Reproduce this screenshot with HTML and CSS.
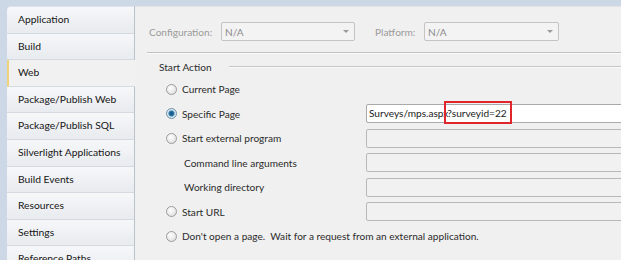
FILE: index.html
```html
<!DOCTYPE html>
<html lang="en">
<head>
<meta charset="UTF-8">
<title>Project Properties - Web</title>
<link rel="stylesheet" href="styles.css">
</head>
<body>
<div class="window">
    <nav class="tabs">
        <div class="tab first">Application</div>
        <div class="tab">Build</div>
        <div class="tab active">Web</div>
        <div class="tab">Package/Publish Web</div>
        <div class="tab">Package/Publish SQL</div>
        <div class="tab">Silverlight Applications</div>
        <div class="tab">Build Events</div>
        <div class="tab">Resources</div>
        <div class="tab">Settings</div>
        <div class="tab">Reference Paths</div>
    </nav>
    <main class="panel">
        <div class="config-bar">
            <span class="dim config-label">Configuration:</span>
            <div class="combo config-combo"><span>N/A</span><span class="arrow"></span></div>
            <span class="dim platform-label">Platform:</span>
            <div class="combo platform-combo"><span>N/A</span><span class="arrow"></span></div>
        </div>
        <div class="rule"></div>
        <section class="group">
            <div class="group-head"><span>Start Action</span><span class="group-line"></span></div>
            <div class="row">
                <label class="option"><span class="radio"></span>Current Page</label>
            </div>
            <div class="row">
                <label class="option"><span class="radio checked"></span>Specific Page</label>
                <div class="field active-field">Surveys/mps.aspx<span class="mark">?surveyid=22</span></div>
            </div>
            <div class="row">
                <label class="option"><span class="radio"></span>Start external program</label>
                <div class="field"></div>
            </div>
            <div class="row">
                <span class="sub-label">Command line arguments</span>
                <div class="field"></div>
            </div>
            <div class="row">
                <span class="sub-label">Working directory</span>
                <div class="field"></div>
            </div>
            <div class="row">
                <label class="option"><span class="radio"></span>Start URL</label>
                <div class="field"></div>
            </div>
            <div class="row">
                <label class="option wide"><span class="radio"></span>Don't open a page.&nbsp; Wait for a request from an external application.</label>
            </div>
        </section>
    </main>
</div>
</body>
</html>
```
FILE: styles.css
```css
body {
    margin: 0;
    background-color: #cdd8e6;
    font-family: Lato, 'Liberation Sans', sans-serif;
    font-size: 10.1px;
    color: #2b2b2b;
    overflow: hidden;
}
.window {
    display: flex;
    height: 260px;
    padding: 6px 0 0 7px;
    box-sizing: border-box;
}
.tabs {
    width: 127px;
    flex-shrink: 0;
    background-color: #dfe5ec;
    border-right: 1px solid #b9c3ce;
    border-top-left-radius: 4px;
    padding-top: 1px;
}
.tab {
    height: 25.6px;
    line-height: 25.6px;
    padding-left: 11px;
    border-bottom: 1px solid #d5dae1;
    background: linear-gradient(#f6f7f9, #e8ebef);
    color: #161616;
    font-size: 10.3px;
    white-space: nowrap;
}
.tab.first {
    border-top-left-radius: 4px;
}
.tab.active {
    background: #f1f1f1;
    margin-right: -1px;
    border-left: 2px solid #f0d27a;
    padding-left: 9px;
    position: relative;
}
.panel {
    flex: 1;
    background-color: #f0f0f0;
    border-top: 1px solid #e4e4e4;
    overflow: hidden;
}
.config-bar {
    display: flex;
    align-items: center;
    padding: 15px 0 0 14px;
}
.dim {
    color: #9b9b9b;
}
.config-label {
    width: 72px;
}
.platform-label {
    width: 49px;
    margin-left: 20px;
}
.combo {
    height: 17px;
    border: 1px solid #c4c4c4;
    border-radius: 2px;
    background-color: #f3f3f3;
    display: flex;
    align-items: center;
    justify-content: space-between;
    padding: 0 5px 0 3px;
    color: #8a8a8a;
    box-sizing: content-box;
}
.config-combo {
    width: 124px;
}
.platform-combo {
    width: 125px;
}
.arrow {
    width: 0;
    height: 0;
    border-left: 3px solid transparent;
    border-right: 3px solid transparent;
    border-top: 3px solid #9a9a9a;
}
.rule {
    margin: 11px 0 0 12px;
    border-top: 1px solid #c2c2c2;
    border-bottom: 1px solid #fafafa;
}
.group {
    padding-left: 31px;
}
.group-head {
    display: flex;
    align-items: center;
    height: 14px;
    margin: 6px 0 3px -7px;
}
.group-line {
    flex: 1;
    margin-left: 17px;
    border-top: 1px solid #c6c6c6;
    border-bottom: 1px solid #fafafa;
}
.row {
    display: flex;
    align-items: center;
    height: 24.5px;
}
.option {
    display: flex;
    align-items: center;
    width: 200px;
    flex-shrink: 0;
    white-space: nowrap;
}
.option.wide {
    width: auto;
}
.sub-label {
    width: 182px;
    padding-left: 18px;
    flex-shrink: 0;
}
.radio {
    width: 9px;
    height: 9px;
    border: 1px solid #9c9c9c;
    border-radius: 50%;
    background: radial-gradient(circle at 40% 35%, #ffffff, #d8d8d8);
    margin-right: 5px;
    flex-shrink: 0;
    box-sizing: content-box;
}
.radio.checked {
    background: radial-gradient(circle, #0f4e7c 0, #2a78a8 2.5px, #cfe3ef 3.5px, #e8eef2 5px);
    border-color: #6f8ea3;
}
.field {
    flex: 1;
    height: 17px;
    margin-right: -4px;
    border: 1px solid #b8b8b8;
    border-radius: 2px;
    background-color: #f1f1f1;
    box-sizing: content-box;
}
.active-field {
    background-color: #ffffff;
    border-color: #a9a9a9;
    line-height: 17px;
    padding-left: 2px;
    color: #1a1a1a;
    white-space: nowrap;
}
.mark {
    padding: 4px 3px 3px 1px;
    margin-left: -2px;
    outline: 2px solid #e0252b;
}
```
